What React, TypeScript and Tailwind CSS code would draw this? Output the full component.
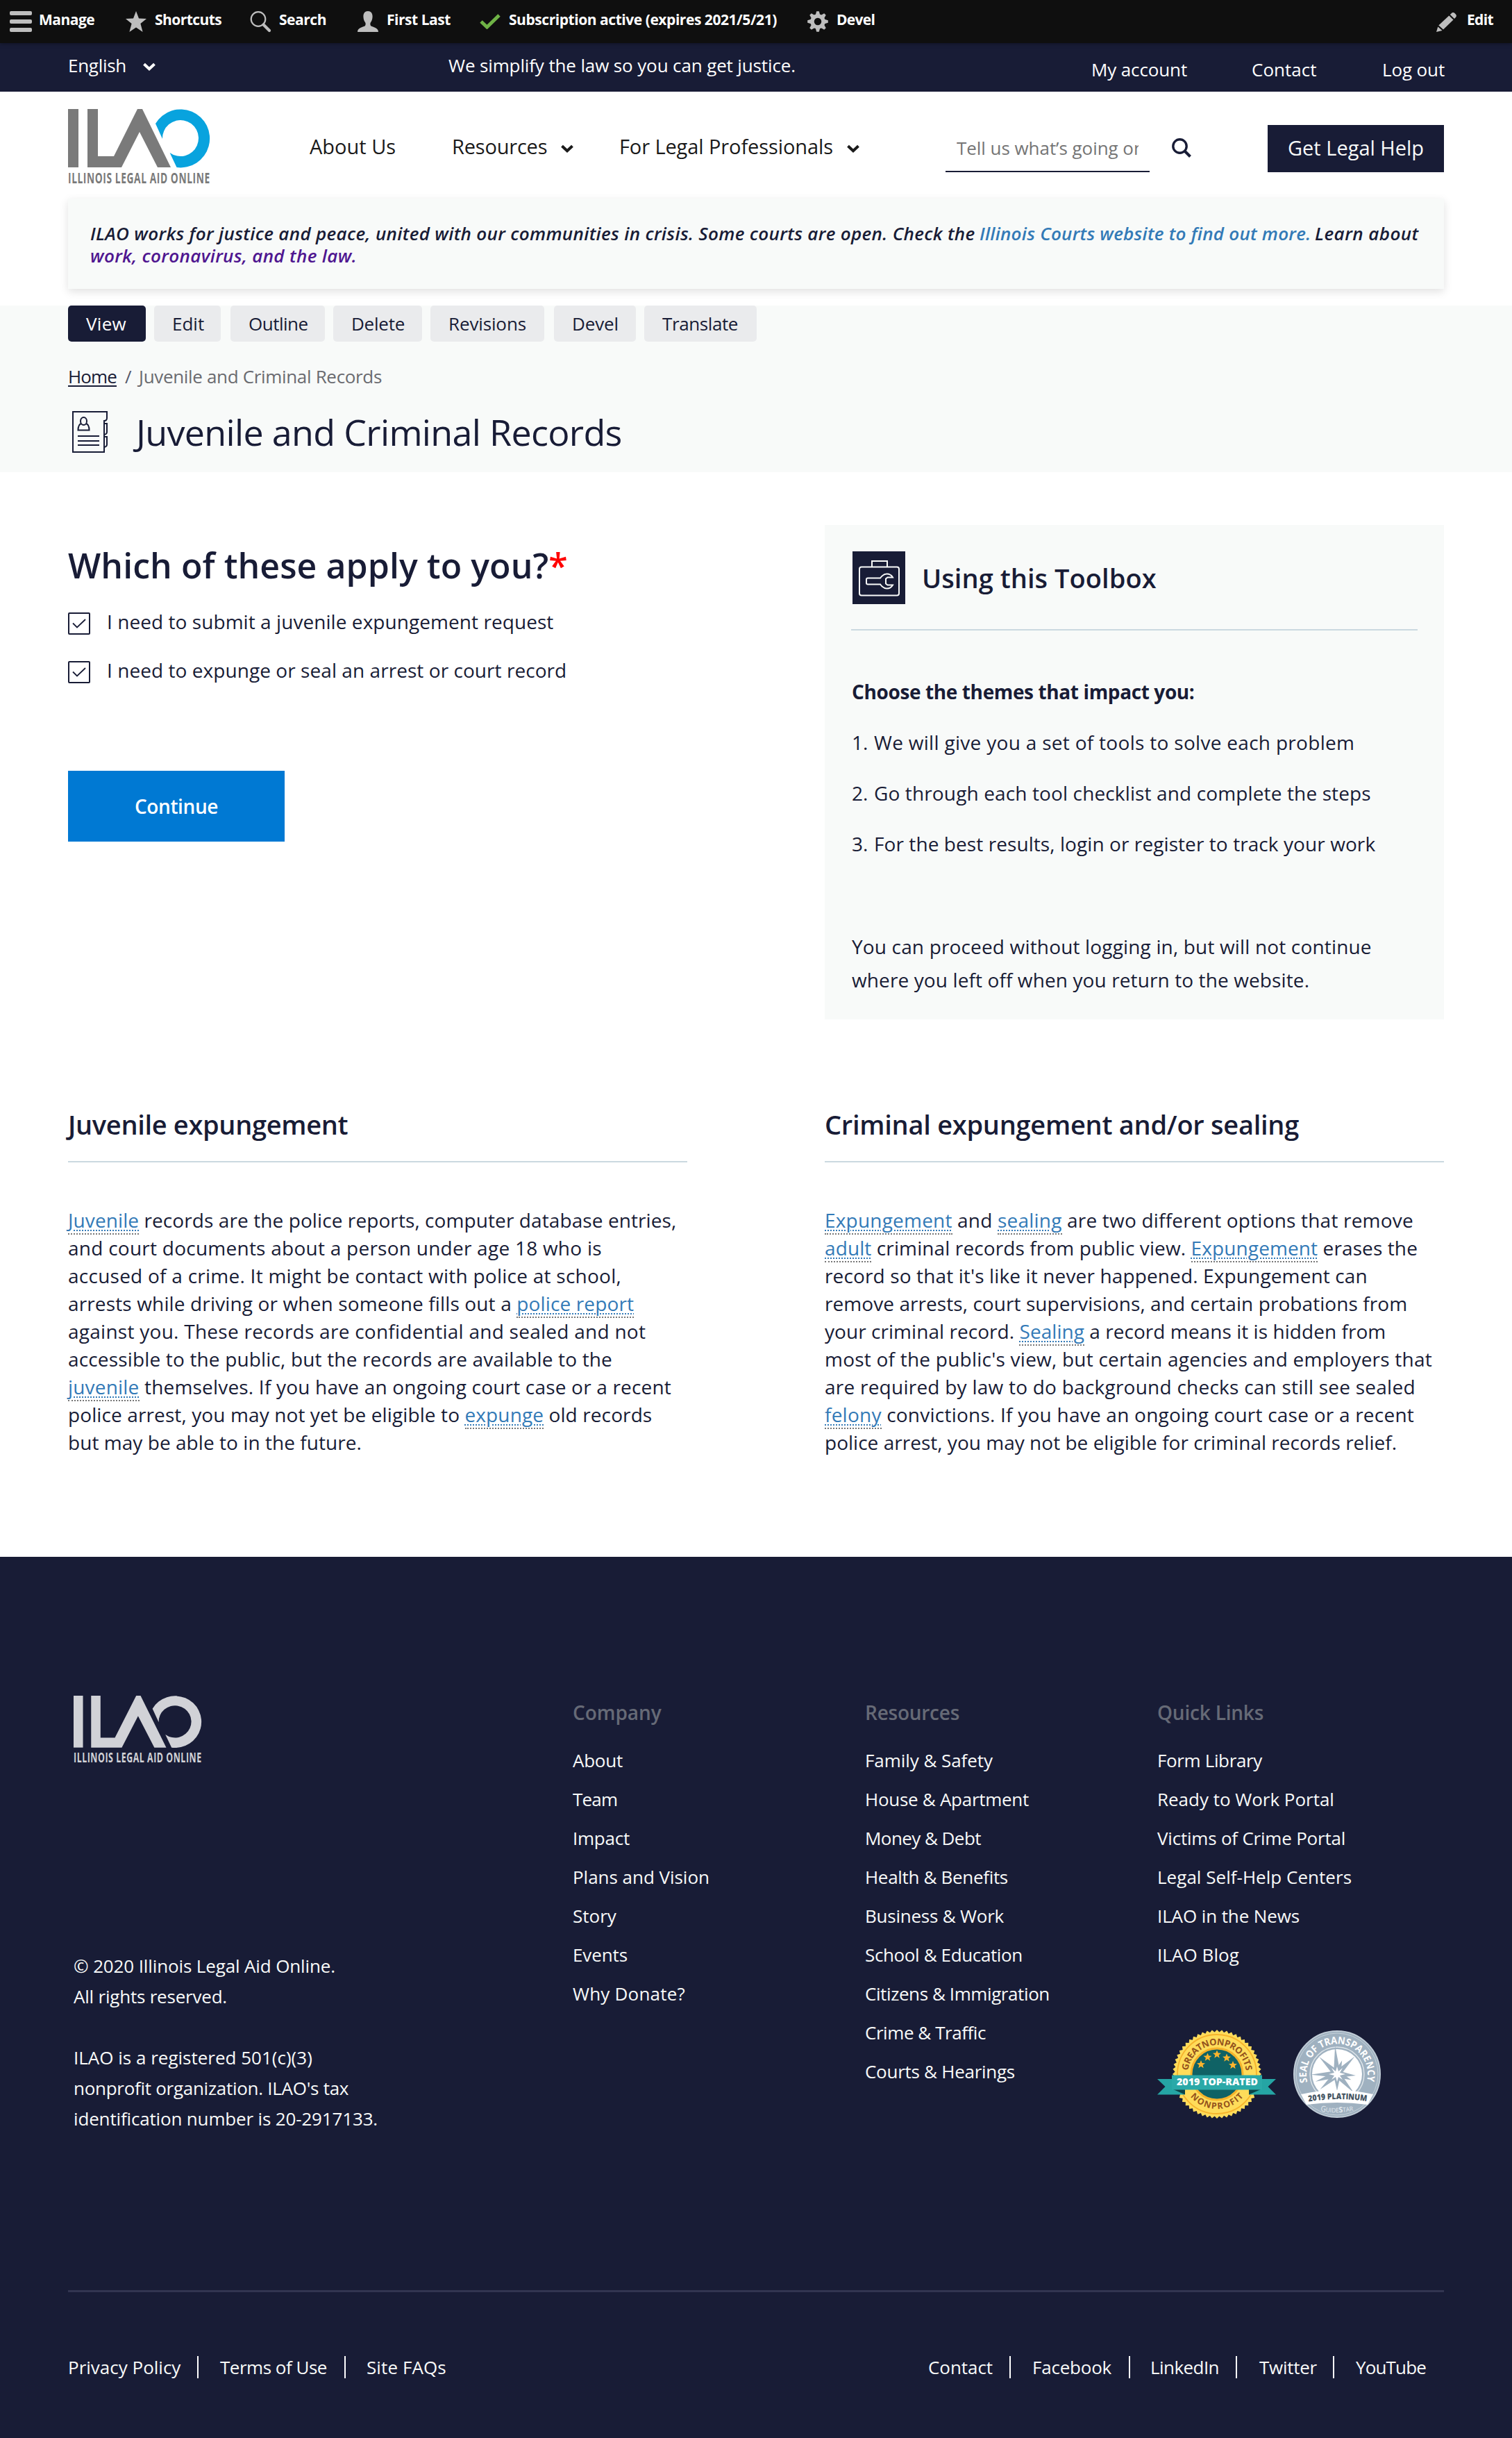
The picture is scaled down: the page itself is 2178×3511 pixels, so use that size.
import type { ReactNode } from "react";

type Item = { t: string; c: string };

const tabs: Item[] = [
  { t: "View", c: "w-[112px] bg-[#181c36] text-white tracking-[0.3px]" },
  { t: "Edit", c: "ml-[12px] w-[96px] bg-[#eaebed]" },
  { t: "Outline", c: "ml-[14px] w-[136px] bg-[#eaebed] tracking-[-0.5px]" },
  { t: "Delete", c: "ml-[12px] w-[128px] bg-[#eaebed] tracking-[-0.25px]" },
  { t: "Revisions", c: "ml-[12px] w-[164px] bg-[#eaebed] tracking-[-0.13px]" },
  { t: "Devel", c: "ml-[14px] w-[118px] bg-[#eaebed] tracking-[-0.13px]" },
  { t: "Translate", c: "ml-[12px] w-[162px] bg-[#eaebed] tracking-[-0.4px]" },
];

const company: Item[] = [
  { t: "About", c: "tracking-[-0.24px]" },
  { t: "Team", c: "tracking-[-0.8px]" },
  { t: "Impact", c: "tracking-[-0.24px]" },
  { t: "Plans and Vision", c: "tracking-[-0.03px]" },
  { t: "Story", c: "" },
  { t: "Events", c: "tracking-[-0.11px]" },
  { t: "Why Donate?", c: "tracking-[0.2px]" },
];

const resources: Item[] = [
  { t: "Family & Safety", c: "tracking-[-0.06px]" },
  { t: "House & Apartment", c: "tracking-[-0.28px]" },
  { t: "Money & Debt", c: "tracking-[-0.56px]" },
  { t: "Health & Benefits", c: "tracking-[-0.32px]" },
  { t: "Business & Work", c: "tracking-[-0.23px]" },
  { t: "School & Education", c: "tracking-[-0.37px]" },
  { t: "Citizens & Immigration", c: "tracking-[-0.41px]" },
  { t: "Crime & Traffic", c: "tracking-[-0.44px]" },
  { t: "Courts & Hearings", c: "tracking-[-0.27px]" },
];

const quickLinks: Item[] = [
  { t: "Form Library", c: "tracking-[-0.36px]" },
  { t: "Ready to Work Portal", c: "tracking-[-0.02px]" },
  { t: "Victims of Crime Portal", c: "tracking-[-0.21px]" },
  { t: "Legal Self-Help Centers", c: "tracking-[0.03px]" },
  { t: "ILAO in the News", c: "tracking-[-0.11px]" },
  { t: "ILAO Blog", c: "tracking-[0.07px]" },
];

function Chevron({ className = "" }: { className?: string }) {
  return (
    <svg className={className} width="20" height="12" viewBox="0 0 20 12" fill="none">
      <path d="M2.5 2.2 10 9.2l7.5-7" stroke="currentColor" strokeWidth="4" />
    </svg>
  );
}

function Logo({ className, main, ring }: { className: string; main: string; ring: string }) {
  return (
    <svg className={`shrink-0 overflow-visible ${className}`} viewBox="0 0 204 108" preserveAspectRatio="none">
      <g fill={main}>
        <rect width="15" height="84" />
        <path d="M28 0h15v68h23L100 0h7l41 84h-19L103 33 77 84H28z" />
        <text
          x="0"
          y="107.5"
          transform="scale(0.64 1)"
          fontFamily="Open Sans, sans-serif"
          fontWeight="700"
          fontSize="21.5"
          textLength="319"
        >
          ILLINOIS LEGAL AID ONLINE
        </text>
      </g>
      <path fill={ring} d="M126 21A42 42 0 1 1 156.5 84L146.6 63A26 26 0 1 0 136 43Z" />
    </svg>
  );
}

function BarsIcon() {
  return (
    <svg width="32" height="30" viewBox="0 0 32 30" fill="#bebebe">
      <rect width="32" height="6" rx="2" />
      <rect y="12" width="32" height="6" rx="2" />
      <rect y="24" width="32" height="6" rx="2" />
    </svg>
  );
}
function StarIcon() {
  return (
    <svg width="30" height="30" viewBox="0 0 30 30" fill="#bebebe">
      <path d="M15 0l4 10.6 11 .4-8.6 7L24.6 30 15 23.4 5.4 30l3.2-12L0 11l11-.4z" />
    </svg>
  );
}
function LensIcon() {
  return (
    <svg width="31" height="31" viewBox="0 0 31 31" fill="none" stroke="#bebebe">
      <circle cx="12" cy="11.5" r="10.3" strokeWidth="2.2" />
      <path d="M19.5 19.5l8.5 8.5" strokeWidth="4.2" strokeLinecap="round" />
    </svg>
  );
}
function PersonIcon() {
  return (
    <svg width="30" height="30" viewBox="0 0 30 30" fill="#bebebe">
      <path d="M15 0c4.3 0 6.6 3 6.6 7.5 0 4-1.2 7-2.8 9-.8 1.2-.6 4 .7 5 2.5 1.6 10.5 2 10.5 8.500H0c0-6.500 8-6.900 10.500-8.500 1.300-1 1.500-3.800.7-5-1.600-2-2.800-5-2.800-9C8.400 3 10.700 0 15 0z" />
    </svg>
  );
}
function CheckIcon() {
  return (
    <svg width="30" height="22" viewBox="0 0 30 22" fill="none">
      <path d="M2 11l8.500 8L28 2" stroke="#6fb346" strokeWidth="5" />
    </svg>
  );
}
function GearIcon() {
  const teeth = [0, 45, 90, 135, 180, 225, 270, 315];
  return (
    <svg width="30" height="30" viewBox="-15 -15 30 30">
      {teeth.map((a) => (
        <path key={a} d="M-3.4 -9L-1.8 -14.8h3.6L3.4 -9z" fill="#bebebe" transform={`rotate(${a})`} />
      ))}
      <circle r="8" fill="none" stroke="#bebebe" strokeWidth="5.5" />
    </svg>
  );
}
function PencilIcon() {
  return (
    <svg width="30" height="28" viewBox="0 0 30 28" fill="#bebebe">
      <path d="M21.5 1.5c1.5-1.8 3.5-1.8 5.2-.2l1 1c1.6 1.6 1.6 3.4 0 5L26 9l-6.2-6z" />
      <path d="M18.3 4.5l6.2 6L10 24.5l-6.7-6z" />
      <path d="M2.3 20.5L8.5 26 0 28z" />
    </svg>
  );
}

const adminItems: { icon: ReactNode; t: string; c: string; s: string }[] = [
  { icon: <BarsIcon />, t: "Manage", c: "w-[167px]", s: "tracking-[-0.5px]" },
  { icon: <StarIcon />, t: "Shortcuts", c: "w-[179px]", s: "tracking-[-0.55px]" },
  { icon: <LensIcon />, t: "Search", c: "w-[155px]", s: "tracking-[-0.47px]" },
  { icon: <PersonIcon />, t: "First Last", c: "w-[176px]", s: "tracking-[-0.46px]" },
  { icon: <CheckIcon />, t: "Subscription active (expires 2021/5/21)", c: "w-[472px]", s: "tracking-[-0.45px]" },
  { icon: <GearIcon />, t: "Devel", c: "", s: "tracking-[-0.7px]" },
];

function AdminBar() {
  return (
    <div className="relative z-10 h-[62px] bg-[#0f0f0f] pl-[14px] pr-[28px] text-[21px] font-bold text-white shadow-[0_0_6px_rgba(0,0,0,0.5)]">
      <div className="flex h-[57px] items-center">
        {adminItems.map((i) => (
          <div key={i.t} className={`flex items-center ${i.c}`}>
            <span className="w-[42px] pt-[5px]">{i.icon}</span>
            <span className={i.s}>{i.t}</span>
          </div>
        ))}
        <div className="ml-auto flex items-center">
          <span className="w-[44px] pt-[7px]">
            <PencilIcon />
          </span>
          <span className="w-[37px] tracking-[-0.64px]">Edit</span>
        </div>
      </div>
    </div>
  );
}

function TopStrip() {
  return (
    <div className="flex h-[70px] bg-[#181c36] px-[98px] text-[26px] leading-[64px] text-white">
      <div className="flex w-[548px] items-start">
        <span className="w-[107px] tracking-[-0.28px]">English</span>
        <Chevron className="mt-[28px]" />
      </div>
      <div className="tracking-[-0.13px]">We simplify the law so you can get justice.</div>
      <div className="ml-auto flex leading-[76px]">
        <span className="w-[137px] tracking-[-0.13px]">My account</span>
        <span className="ml-[94px] w-[93px]">Contact</span>
        <span className="ml-[95px] w-[89px] tracking-[-0.13px]">Log out</span>
      </div>
    </div>
  );
}

function Header() {
  return (
    <header className="flex h-[154px] items-center bg-white px-[98px] pt-[3px] text-[29px] text-[#1a1a1a]">
      <Logo className="h-[108px] w-[204px]" main="#7a7a7a" ring="#08a3de" />
      <span className="ml-[144px] w-[124px]">About Us</span>
      <span className="ml-[81px] w-[156px] tracking-[-0.2px]">Resources</span>
      <Chevron className="mt-[6px]" />
      <span className="ml-[65px] w-[327px] tracking-[-0.1px]">For Legal Professionals</span>
      <Chevron className="mt-[6px]" />
      <div className="ml-[123px] h-[74px] w-[294px] border-b-2 border-[#181c36] px-[16px] pt-[3px] text-[26px] leading-[72px] text-[#757575]">
        <div className="w-[262px] overflow-hidden tracking-[-0.05px]">Tell us what’s going on</div>
      </div>
      <svg className="mt-[5px] ml-[32px]" width="28" height="28" viewBox="0 0 28 28" fill="none" stroke="#181c36">
        <circle cx="11.5" cy="11.5" r="9.7" strokeWidth="3.4" />
        <path d="M18.5 18.5l8 8" strokeWidth="4" />
      </svg>
      <div className="mt-[7px] ml-[110px] h-[68px] w-[254px] bg-[#181c36] pl-[29px] leading-[65px] text-[#f8faf9]">
        Get Legal Help
      </div>
    </header>
  );
}

function Alert() {
  return (
    <div className="mx-[98px] h-[130px] bg-[#f8faf9] pt-[34px] pl-[32px] text-[26px] leading-[32px] font-semibold whitespace-nowrap text-[#181c36] italic shadow-[0_4px_12px_rgba(0,0,0,0.12)]">
      <div className="flex">
        <span className="w-[1281px] tracking-[0.32px]">
          ILAO works for justice and peace, united with our communities in crisis. Some courts are open. Check the
        </span>
        <span className="w-[483px] tracking-[0.23px] text-[#337ab7]">Illinois Courts website to find out more.</span>
        <span className="tracking-[0.45px]">Learn about</span>
      </div>
      <div className="tracking-[0.34px] text-[#4f1690]">work, coronavirus, and the law.</div>
    </div>
  );
}

function RecordsIcon() {
  return (
    <svg width="52" height="60" viewBox="0 0 52 60" fill="none" stroke="#181c36" strokeWidth="2">
      <path d="M50 1H1v58h45V14c3 0 4-1.5 4-4z" />
      <path d="M46 18h4v12c0 2.5-1 3.5-4 4M46 37h4v11c0 2.5-1 3.5-4 4" />
      <path d="M13 18c-3 1-4.5 3-4.5 9.5h16c0-6.5-1.5-8.5-4.5-9.5" />
      <ellipse cx="16.5" cy="14.5" rx="4.5" ry="5.5" />
      <path d="M8 36h31M8 43h31M8 49h31" />
    </svg>
  );
}

function TitleBand() {
  return (
    <section className="mt-[24px] h-[240px] bg-[#f8faf9] px-[98px] text-[26px] text-[#181c36]">
      <div className="flex">
        {tabs.map((t) => (
          <div key={t.t} className={`h-[52px] rounded-[5px] pl-[26px] leading-[52px] ${t.c}`}>
            {t.t}
          </div>
        ))}
      </div>
      <div className="mt-[26px] flex leading-[48px]">
        <span className="w-[82px]">
          <span className="tracking-[-0.87px] underline decoration-2 underline-offset-[3px]">Home</span>
        </span>
        <span className="w-[20px] text-[#55586a]">/</span>
        <span className="tracking-[-0.33px] text-[#6a6b70]">Juvenile and Criminal Records</span>
      </div>
      <div className="flex h-[112px] items-center pl-[6px]">
        <RecordsIcon />
        <h1 className="ml-[40px] text-[52px] tracking-[-0.67px]">Juvenile and Criminal Records</h1>
      </div>
    </section>
  );
}

function CheckRow({ label }: { label: string }) {
  return (
    <div className="flex h-[70px] items-center">
      <span className="flex h-[32px] w-[32px] items-center justify-center rounded-[2px] border-2 border-[#181c36]">
        <svg width="20" height="14" viewBox="0 0 20 14" fill="none">
          <path d="M1 6.5l6 6L19 1" stroke="#181c36" strokeWidth="1.8" />
        </svg>
      </span>
      <span className="mt-[-6px] ml-[24px] tracking-[0.06px]">{label}</span>
    </div>
  );
}

function ToolboxIcon() {
  return (
    <svg width="76" height="76" viewBox="0 0 76 76" fill="none" stroke="#f8faf9" strokeWidth="2">
      <rect width="76" height="76" fill="#181c36" stroke="none" />
      <rect x="10" y="22.5" width="57" height="41" rx="3" />
      <path d="M28 22v-8h22v8" />
      <path d="M58 37.5h-7.5l-2.5 2v7l2.5 2H58c-2 3.5-5 5-8.5 5-4.5 0-7-2.5-9.500-6H22c-1.500 0-2-.5-2-2v-5c0-1.500.5-2 2-2h18c2.500-3.500 5-6 9.500-6 3.500 0 6.500 1.500 8.500 5z" />
    </svg>
  );
}

function Intro() {
  return (
    <section className="flex justify-between px-[98px] pt-[76px] text-[28px] whitespace-nowrap text-[#181c36]">
      <div className="w-[892px] pt-[20px]">
        <h2 className="mb-[11px] text-[50px] leading-[76px] font-semibold">
          <span className="tracking-[0.06px]">Which of these apply to you?</span>
          <span className="text-[#ff0000]">*</span>
        </h2>
        <CheckRow label="I need to submit a juvenile expungement request" />
        <CheckRow label="I need to expunge or seal an arrest or court record" />
        <button className="mt-[107px] h-[102px] w-[312px] bg-[#0079d3] text-center font-semibold tracking-[-0.4px] text-white">
          Continue
        </button>
      </div>
      <div className="h-[712px] w-[892px] bg-[#f8faf9] px-[38px] pt-[38px] leading-[48px]">
        <div className="flex h-[76px] items-center pl-[2px]">
          <ToolboxIcon />
          <h3 className="ml-[24px] text-[38px] font-semibold tracking-[0.05px]">Using this Toolbox</h3>
        </div>
        <div className="mt-[36px] h-[2px] bg-[#cbd9e0]" />
        <div className="mt-[64px] pl-px font-bold tracking-[-0.38px]">Choose the themes that impact you:</div>
        <div className="mt-[25px] flex flex-col gap-[25px] pl-px">
          <div className="flex">
            <span className="w-[32px]">1.</span>
            <span className="tracking-[0.3px]">We will give you a set of tools to solve each problem</span>
          </div>
          <div className="flex">
            <span className="w-[32px]">2.</span>
            <span className="tracking-[0.13px]">Go through each tool checklist and complete the steps</span>
          </div>
          <div className="flex">
            <span className="w-[32px]">3.</span>
            <span className="tracking-[0.08px]">For the best results, login or register to track your work</span>
          </div>
        </div>
        <div className="mt-[100px] pl-px tracking-[0.16px]">You can proceed without logging in, but will not continue</div>
        <div className="pl-px tracking-[0.11px]">where you left off when you return to the website.</div>
      </div>
    </section>
  );
}

function A({ children }: { children: ReactNode }) {
  return (
    <a className="border-b-2 border-dotted border-[#777] text-[#337ab7] underline decoration-dotted decoration-2 underline-offset-[3px]">
      {children}
    </a>
  );
}

function Topics() {
  return (
    <section className="flex justify-between px-[98px] pt-[121px] text-[28px] leading-[40px] whitespace-nowrap text-[#181c36]">
      <div className="w-[892px]">
        <h3 className="text-[38px] leading-[60px] font-semibold tracking-[-0.33px]">Juvenile expungement</h3>
        <div className="mt-[23px] mb-[63px] h-[2px] bg-[#cbd9e0]" />
        <div className="tracking-[0.09px]"><A>Juvenile</A> records are the police reports, computer database entries,</div>
        <div className="tracking-[0.25px]">and court documents about a person under age 18 who is</div>
        <div className="tracking-[0.25px]">accused of a crime. It might be contact with police at school,</div>
        <div className="tracking-[0.14px]">arrests while driving or when someone fills out a <A>police report</A></div>
        <div className="tracking-[0.26px]">against you. These records are confidential and sealed and not</div>
        <div className="tracking-[0.16px]">accessible to the public, but the records are available to the</div>
        <div className="tracking-[0.19px]"><A>juvenile</A> themselves. If you have an ongoing court case or a recent</div>
        <div className="tracking-[0.11px]">police arrest, you may not yet be eligible to <A>expunge</A> old records</div>
        <div className="tracking-[0.05px]">but may be able to in the future.</div>
      </div>
      <div className="w-[892px]">
        <h3 className="text-[38px] leading-[60px] font-semibold tracking-[-0.27px]">Criminal expungement and/or sealing</h3>
        <div className="mt-[23px] mb-[63px] h-[2px] bg-[#cbd9e0]" />
        <div className="tracking-[0.2px]"><A>Expungement</A> and <A>sealing</A> are two different options that remove</div>
        <div className="tracking-[0.11px]"><A>adult</A> criminal records from public view. <A>Expungement</A> erases the</div>
        <div className="tracking-[0.13px]">record so that it's like it never happened. Expungement can</div>
        <div className="tracking-[0.07px]">remove arrests, court supervisions, and certain probations from</div>
        <div className="tracking-[0.05px]">your criminal record. <A>Sealing</A> a record means it is hidden from</div>
        <div className="tracking-[0.23px]">most of the public's view, but certain agencies and employers that</div>
        <div className="tracking-[0.24px]">are required by law to do background checks can still see sealed</div>
        <div className="tracking-[0.23px]"><A>felony</A> convictions. If you have an ongoing court case or a recent</div>
        <div className="tracking-[0.02px]">police arrest, you may not be eligible for criminal records relief.</div>
      </div>
    </section>
  );
}

const TEETH = 56;
const sealEdge = Array.from({ length: TEETH * 2 }, (_, i) => {
  const r = i % 2 ? 60.5 : 64;
  const a = (i * Math.PI) / TEETH;
  return `${(r * Math.sin(a)).toFixed(2)},${(-r * Math.cos(a)).toFixed(2)}`;
}).join(" ");
const STAR = "0,-6 1.7,-1.9 6,-1.7 2.6,1 3.7,5.2 0,2.8 -3.7,5.2 -2.6,1 -6,-1.7 -1.7,-1.9";
const starSpots = [
  [-23, -14],
  [-13.5, -24.5],
  [0, -28.5],
  [14, -23.5],
  [23, -13],
];

function TopRatedBadge() {
  return (
    <svg width="171" height="130" viewBox="-86 -65 171 130" fontFamily="Open Sans, sans-serif">
      <polygon points={sealEdge} fill="#fedc5a" />
      <circle r="57" fill="none" stroke="#f6b32c" strokeWidth="1.8" />
      <circle r="37" fill="#0f6265" stroke="#f6b32c" strokeWidth="3" />
      {starSpots.map(([x, y]) => (
        <polygon key={x} points={STAR} fill="#fbb42d" transform={`translate(${x} ${y})`} />
      ))}
      <path id="topArc" d="M-42 0A42 42 0 0 1 42 0" fill="none" />
      <path id="lowArc" d="M-50 0A50 50 0 0 0 50 0" fill="none" />
      <text fill="#93521c" fontSize="13" fontWeight="700">
        <textPath href="#topArc" startOffset="5" textLength="122">GREATNONPROFITS</textPath>
      </text>
      <text fill="#93521c" fontSize="12.5" fontWeight="700">
        <textPath href="#lowArc" startOffset="35" textLength="87">NONPROFIT</textPath>
      </text>
      <path d="M-65 7h-21l11.5 11L-86 29.5h39.5V22L-65 18zM65 7h20L73.5 18 85 29.5H46V22l19-4z" fill="#25a5a4" />
      <path d="M-63 22h17v7.5zM63 22H46v7.5z" fill="#0b4347" />
      <rect x="-65" y="1.5" width="130" height="21" fill="#2aa9a8" />
      <text x="-58" y="16" fill="#fff" fontSize="13.5" fontWeight="800" textLength="117" lengthAdjust="spacingAndGlyphs">
        2019 TOP-RATED
      </text>
    </svg>
  );
}

const rays = [
  { a: 356, r: 41 },
  { a: 45, r: 36 },
  { a: 94, r: 27 },
  { a: 138, r: 36 },
  { a: 180, r: 24 },
  { a: 228, r: 33 },
  { a: 269, r: 38 },
  { a: 314, r: 36 },
  { a: 20, r: 21 },
  { a: 112, r: 22 },
  { a: 251, r: 33 },
];

function PlatinumBadge() {
  return (
    <svg width="126" height="126" viewBox="-63 -63 126 126" fontFamily="Open Sans, sans-serif">
      <circle r="62" fill="#9fb1c0" stroke="#c0ccd6" strokeWidth="2" />
      <circle r="59" fill="none" stroke="#c7d2da" strokeWidth="1" />
      <circle r="39" fill="none" stroke="#dde4e9" strokeWidth="1.5" />
      <circle r="36" fill="#fff" />
      {rays.map((s) => (
        <path key={s.a} d={`M-4.5 -4L0 -${s.r}L4.5 -4L0 3z`} fill="#9fb1c0" transform={`rotate(${s.a})`} />
      ))}
      <path d="M0-11l2 7 6-5-4 7 8 2-8 2 4 6-6-4-2 7-2-7-6 4 4-6-8-2 8-2-4-7 6 5z" fill="#fff" />
      <path d="M-52 29Q0 17 52 29L44 44Q0 38-44 44z" fill="#fff" />
      <path id="sealArc" d="M-42 13.5A44 44 0 1 1 42 13.5" fill="none" />
      <text fill="#fff" fontSize="14.5" fontWeight="700">
        <textPath href="#sealArc" startOffset="2" textLength="159" lengthAdjust="spacingAndGlyphs">SEAL OF TRANSPARENCY</textPath>
      </text>
      <path id="yearArc" d="M-41 39.5Q0 33 43 39" fill="none" />
      <text fill="#43535f" fontSize="12" fontWeight="800">
        <textPath href="#yearArc" textLength="84" lengthAdjust="spacingAndGlyphs">2019 PLATINUM</textPath>
      </text>
      <path id="starArc" d="M-24 53Q0 58 25 52" fill="none" />
      <text fill="#e6ecf0" fontSize="9">
        <textPath href="#starArc" textLength="48" lengthAdjust="spacingAndGlyphs">
          <tspan fontSize="11">G</tspan>UIDE<tspan fontSize="11" fontWeight="700">S</tspan>TAR
        </textPath>
      </text>
    </svg>
  );
}

function LinkColumn({ title, titleClass, items, children }: { title: string; titleClass: string; items: Item[]; children?: ReactNode }) {
  return (
    <div className="w-[421px] shrink-0">
      <h4 className={`mb-[17px] text-[28px] leading-[48px] font-semibold text-[#666a76] ${titleClass}`}>{title}</h4>
      {items.map((i) => (
        <div key={i.t} className={`h-[56px] leading-[56px] ${i.c}`}>
          {i.t}
        </div>
      ))}
      {children}
    </div>
  );
}

function Footer() {
  return (
    <footer className="mt-[145px] h-[1269px] bg-[#181c36] px-[98px] pt-[200px] text-[26px] whitespace-nowrap text-[#f8faf9]">
      <div className="flex h-[856px] pl-[8px]">
        <div className="w-[719px] shrink-0 leading-[44px]">
          <Logo className="mb-[271px] h-[96px] w-[184px]" main="#d1d2d7" ring="#d1d2d7" />
          <div className="tracking-[-0.13px]">© 2020 Illinois Legal Aid Online.</div>
          <div className="tracking-[-0.21px]">All rights reserved.</div>
          <div className="mt-[44px]">ILAO is a registered 501(c)(3)</div>
          <div className="tracking-[-0.28px]">nonprofit organization. ILAO's tax</div>
          <div className="tracking-[-0.16px]">identification number is 20-2917133.</div>
        </div>
        <LinkColumn title="Company" titleClass="tracking-[-0.05px]" items={company} />
        <LinkColumn title="Resources" titleClass="tracking-[-0.25px]" items={resources} />
        <LinkColumn title="Quick Links" titleClass="tracking-[-0.2px]" items={quickLinks}>
          <div className="mt-[79px] flex items-center">
            <TopRatedBadge />
            <div className="ml-[25px]">
              <PlatinumBadge />
            </div>
          </div>
        </LinkColumn>
      </div>
      <div className="h-[3px] bg-[#323551]" />
      <div className="mt-[68px] flex h-[80px] items-center leading-[32px]">
        <span className="w-[188px] border-r-2 border-white">Privacy Policy</span>
        <span className="ml-[31px] w-[181px] border-r-2 border-white tracking-[-0.49px]">Terms of Use</span>
        <span className="ml-[30px] tracking-[0.1px]">Site FAQs</span>
        <span className="ml-auto w-[119px] border-r-2 border-white tracking-[-0.06px]">Contact</span>
        <span className="ml-[31px] w-[141px] border-r-2 border-white tracking-[-0.22px]">Facebook</span>
        <span className="ml-[29px] w-[125px] border-r-2 border-white tracking-[-0.56px]">LinkedIn</span>
        <span className="ml-[32px] w-[108px] border-r-2 border-white tracking-[-0.26px]">Twitter</span>
        <span className="mr-[27px] ml-[31px] w-[100px] tracking-[-0.84px]">YouTube</span>
      </div>
    </footer>
  );
}

export default function App() {
  return (
    <div className="w-[2178px] overflow-hidden bg-white font-['Open_Sans',sans-serif] whitespace-nowrap">
      <AdminBar />
      <TopStrip />
      <Header />
      <Alert />
      <TitleBand />
      <Intro />
      <Topics />
      <Footer />
    </div>
  );
}
